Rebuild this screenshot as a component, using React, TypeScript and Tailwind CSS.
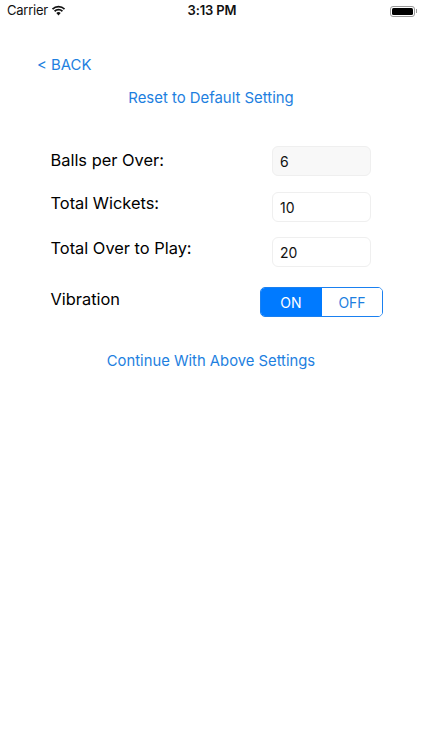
const font = "font-['Inter','Liberation_Sans',sans-serif]";

function StatusBar() {
  return (
    <div className="flex h-[22px] items-center justify-between pl-[7px] pr-[5px] text-[13px] text-[#111]">
      <div className="flex w-[120px] items-center gap-[5px]">
        <span className="tracking-[-0.25px]">Carrier</span>
        <svg width="15" height="11" viewBox="0 0 15 11" className="mb-[2px] ml-[-1.500px]">
          <path d="M7.500 2.600c2.100 0 4 .8 5.400 2.100l1.200-1.300A9.700 9.700 0 0 0 7.500.8 9.700 9.700 0 0 0 .9 3.400l1.200 1.300A7.900 7.900 0 0 1 7.500 2.600z" fill="#111" />
          <path d="M7.500 5.600c1.300 0 2.500.5 3.300 1.300l1.200-1.300a6.600 6.600 0 0 0-9 0l1.200 1.300a4.800 4.800 0 0 1 3.300-1.300z" fill="#111" />
          <path d="M7.500 10.500l2.200-2.400a3.200 3.200 0 0 0-4.400 0z" fill="#111" />
        </svg>
      </div>
      <span className="font-semibold tracking-[-0.15px]">3:13 PM</span>
      <div className="flex w-[120px] items-center justify-end">
        <div className="flex h-[11px] w-[25px] items-center rounded-[3px] border border-[#999] p-[1px]">
          <div className="h-full w-full rounded-[1.5px] bg-black" />
        </div>
        <div className="ml-[1px] h-[4px] w-[1px] bg-[#999]" />
      </div>
    </div>
  );
}

function FieldRow({ label, value, disabled, className, labelClass }: { label: string; value: string; disabled?: boolean; className: string; labelClass: string }) {
  return (
    <div className={"flex items-center " + className}>
      <span className={"ml-[-0.5px] w-[221.5px] text-[16.4px] leading-[20px] text-black " + labelClass}>{label}</span>
      <div className={"flex h-[30px] w-[99px] items-center rounded-[6px] border border-[#efefef] px-[7px] text-[14px] text-[#111] " + (disabled ? "bg-[#f8f8f8]" : "bg-white")}>
        {value}
      </div>
    </div>
  );
}

export default function App() {
  return (
    <div className={"min-h-[750px] w-[422px] bg-white " + font}>
      <StatusBar />
      <div className="pl-[37px] pt-[33px] text-[14.9px] leading-[20px] text-[#1e7fe0]">&lt; BACK</div>
      <div className="pt-[13px] text-center text-[14.9px] leading-[20px] text-[#1e7fe0]">Reset to Default Setting</div>
      <div className="pl-[51px] pt-[38px]">
        <FieldRow label="Balls per Over:" value="6" disabled className="" labelClass="mb-[2px]" />
        <FieldRow label="Total Wickets:" value="10" className="mt-[16px]" labelClass="mb-[8px]" />
        <FieldRow label="Total Over to Play:" value="20" className="mt-[15px]" labelClass="mb-[8px]" />
        <div className="mt-[20px] flex items-center">
          <span className="mb-[6px] ml-[-0.5px] w-[209.5px] text-[16.4px] leading-[20px] text-black">Vibration</span>
          <div className="flex h-[30px] w-[123px] overflow-hidden rounded-[5px] border border-[#1a80f0] text-[14px]">
            <div className="flex w-[61px] items-center justify-center bg-[#007aff] pr-[1px] text-white">ON</div>
            <div className="flex flex-1 items-center justify-center bg-white text-[#1e7fe0]">OFF</div>
          </div>
        </div>
      </div>
      <div className="pt-[34px] text-center text-[14.8px] leading-[20px] text-[#1e7fe0]">Continue With Above Settings</div>
    </div>
  );
}
